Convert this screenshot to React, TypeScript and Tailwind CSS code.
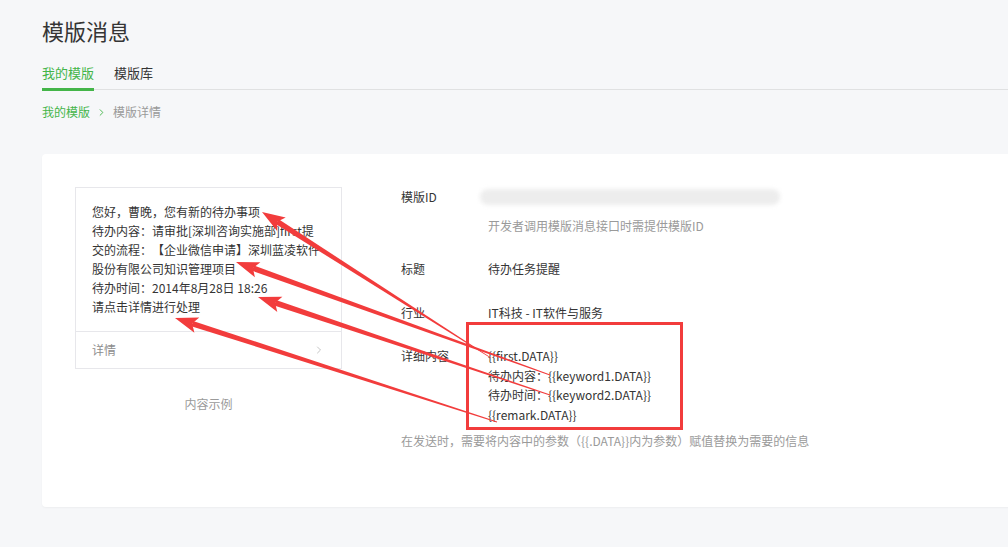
import { ChevronRight } from 'lucide-react';

type Pt = [number, number];

// tip = arrowhead point, tail = thin end inside the red box
const arrows: Array<{ tip: Pt; tail: Pt }> = [
  { tip: [262, 212], tail: [491, 358] },
  { tip: [236, 262], tail: [550, 375] },
  { tip: [258, 297], tail: [550, 395] },
  { tip: [175, 318], tail: [497, 422] },
];

function arrowShapes(tip: Pt, tail: Pt) {
  const dx = tail[0] - tip[0];
  const dy = tail[1] - tip[1];
  const len = Math.hypot(dx, dy);
  const ux = dx / len;
  const uy = dy / len;
  const nx = -uy;
  const ny = ux;
  const headLen = 23;
  const headW = 8;
  const bx = tip[0] + ux * headLen;
  const by = tip[1] + uy * headLen;
  const nb = tip[0] + ux * (headLen - 5);
  const nby = tip[1] + uy * (headLen - 5);
  const p = (x: number, y: number) => `${x.toFixed(1)},${y.toFixed(1)}`;
  const head = [
    p(tip[0], tip[1]),
    p(bx + nx * headW, by + ny * headW),
    p(nb, nby),
    p(bx - nx * headW, by - ny * headW),
  ].join(' ');
  const shaft = [
    p(nb + nx * 2.8, nby + ny * 2.8),
    p(tail[0] + nx * 0.4, tail[1] + ny * 0.4),
    p(tail[0] - nx * 0.4, tail[1] - ny * 0.4),
    p(nb - nx * 2.8, nby - ny * 2.8),
  ].join(' ');
  return { head, shaft };
}

const previewLines = [
  '您好，曹晚，您有新的待办事项',
  '待办内容：请审批[深圳咨询实施部]first提',
  '交的流程：【企业微信申请】深圳蓝凌软件',
  '股份有限公司知识管理项目',
  '待办时间：2014年8月28日 18:26',
  '请点击详情进行处理',
];

const detailLines = [
  '{{first.DATA}}',
  '待办内容：{{keyword1.DATA}}',
  '待办时间：{{keyword2.DATA}}',
  '{{remark.DATA}}',
];

export default function App() {
  return (
    <div
      className="relative h-[547px] w-[1008px] overflow-hidden bg-[#f6f7f9] pl-[42px] text-[#353535] [text-spacing-trim:space-all]"
      style={{ fontFamily: '"Noto Sans CJK SC", "Liberation Sans", sans-serif' }}
    >
      <h1 className="pt-[14px] text-[22px] leading-[32px] font-normal">模版消息</h1>

      <div className="mt-[17px] flex gap-[20px] border-b border-[#e0e1e2] text-[13px] leading-[20px]">
        <div className="-mb-[2px] border-b-[3px] border-[#44b549] pb-[5px] text-[#44b549]">我的模版</div>
        <div className="pb-[5px]">模版库</div>
      </div>

      <div className="mt-[12px] flex items-center text-[12px] leading-[20px]">
        <span className="text-[#44b549]">我的模版</span>
        <ChevronRight size={11} strokeWidth={2} className="mx-[6px] text-[#44b549]" />
        <span className="text-[#9a9a9a]">模版详情</span>
      </div>

      <div className="mt-[32px] flex h-[353px] w-[1000px] gap-[59px] rounded-[4px] bg-white p-[33px] shadow-[0_1px_2px_rgba(0,0,0,0.04)]">
        <div className="flex w-[267px] flex-col items-center">
          <div className="w-full border border-[#e7e7eb]">
            <div className="px-[16px] pt-[14px] pb-[15px] text-[12px] leading-[19px]">
              {previewLines.map((line) => (
                <div key={line} className="whitespace-nowrap">
                  {line}
                </div>
              ))}
            </div>
            <div className="flex h-[37px] items-center justify-between border-t border-[#e7e7eb] px-[16px] text-[12px] text-[#8d8d8d]">
              <span>详情</span>
              <ChevronRight size={12} strokeWidth={1.5} className="text-[#b2b2b2]" />
            </div>
          </div>
          <div className="mt-[26px] text-[12px] leading-[18px] text-[#9a9a9a]">内容示例</div>
        </div>

        <div className="text-[12px] leading-[20px]">
          <div className="flex">
            <div className="w-[87px]">模版ID</div>
            <div className="-ml-[8px] mt-[2px] h-[16px] w-[300px] rounded-full bg-[#ededed] blur-[2px]" />
          </div>
          <div className="mt-[9px] pl-[87px] text-[#9a9a9a]">开发者调用模版消息接口时需提供模版ID</div>

          <div className="mt-[23px] flex">
            <div className="w-[87px]">标题</div>
            <div>待办任务提醒</div>
          </div>

          <div className="mt-[24px] flex">
            <div className="w-[87px]">行业</div>
            <div>IT科技 - IT软件与服务</div>
          </div>

          <div className="mt-[23px] flex leading-[19.5px]">
            <div className="w-[87px]">详细内容</div>
            <div>
              {detailLines.map((line) => (
                <div key={line}>{line}</div>
              ))}
            </div>
          </div>

          <div className="mt-[7px] text-[#9a9a9a]">
            在发送时，需要将内容中的参数（{'{{.DATA}}'}内为参数）赋值替换为需要的信息
          </div>
        </div>
      </div>

      {/* annotation: red frame + arrows */}
      <div className="pointer-events-none absolute left-[466px] top-[322px] h-[108px] w-[217px] border-[3px] border-[#f23c3c]" />
      <svg className="pointer-events-none absolute left-0 top-0" width="1008" height="547">
        {arrows.map((a, i) => {
          const s = arrowShapes(a.tip, a.tail);
          return (
            <g key={i} fill="#f23c3c">
              <polygon points={s.shaft} />
              <polygon points={s.head} />
            </g>
          );
        })}
      </svg>
    </div>
  );
}
